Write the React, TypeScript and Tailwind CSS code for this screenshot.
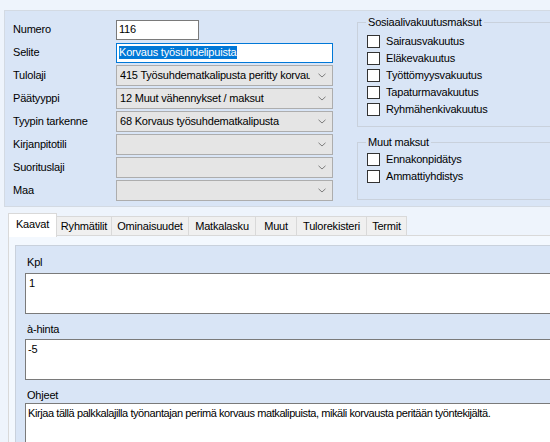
import React from 'react';

const Chevron = () => (
  <svg width="8" height="5" viewBox="0 0 8 5" className="shrink-0">
    <path d="M0.5 0.8 L4 4 L7.5 0.8" fill="none" stroke="#707070" strokeWidth="0.9" />
  </svg>
);

const Combo = ({ value }: { value?: string }) => (
  <div className="flex h-[21px] w-[217px] items-center border border-[#adadad] bg-[#e5e5e5] pl-[3px] pr-[6px]">
    <span className="mr-[8px] flex-1 overflow-hidden whitespace-nowrap">{value}</span>
    <Chevron />
  </div>
);

const Row = ({ label, children }: { label: string; children: React.ReactNode }) => (
  <div className="flex h-[21px] items-center">
    <div className="w-[103px] whitespace-nowrap">{label}</div>
    {children}
  </div>
);

const Check = ({ label }: { label: string }) => (
  <div className="flex h-[17px] items-center gap-[6px]">
    <div className="h-[13px] w-[13px] border border-[#333333] bg-white" />
    <span>{label}</span>
  </div>
);

const tabs = [
  { name: 'Kaavat', w: 'w-[49px]' },
  { name: 'Ryhmätilit', w: 'w-[55px]' },
  { name: 'Ominaisuudet', w: 'w-[77px]' },
  { name: 'Matkalasku', w: 'w-[67px]' },
  { name: 'Muut', w: 'w-[41px]' },
  { name: 'Tulorekisteri', w: 'w-[70px]' },
  { name: 'Termit', w: 'w-[40px]' },
];

export default function App() {
  return (
    <div className="h-[442px] w-[550px] overflow-hidden bg-[#eef4fc] pt-[10px] font-['Liberation_Sans',Arial,sans-serif] text-[11px] leading-[13px] tracking-[-0.2px] text-black">
      {/* Top panel */}
      <div className="ml-[4px] flex h-[197px] border-b border-l border-t border-[#d3dae3] bg-[#d9e5f6]">
        <div className="flex flex-col gap-[2px] pl-[8px] pt-[8px]">
          <Row label="Numero">
            <div className="flex h-[20px] w-[83px] items-center border border-[#7a7a7a] bg-white px-[2px]">116</div>
          </Row>
          <Row label="Selite">
            <div className="flex h-[20px] w-[217px] items-center border border-[#0078d7] bg-white px-[2px]">
              <span className="bg-[#0078d7] text-white">Korvaus työsuhdelipuista</span>
            </div>
          </Row>
          <Row label="Tulolaji">
            <Combo value="415 Työsuhdematkalipusta peritty korvaus" />
          </Row>
          <Row label="Päätyyppi">
            <Combo value="12 Muut vähennykset / maksut" />
          </Row>
          <Row label="Tyypin tarkenne">
            <Combo value="68 Korvaus työsuhdematkalipusta" />
          </Row>
          <Row label="Kirjanpitotili">
            <Combo />
          </Row>
          <Row label="Suorituslaji">
            <Combo />
          </Row>
          <Row label="Maa">
            <Combo />
          </Row>
        </div>

        <div className="ml-[24px] flex flex-col pt-[5px]">
          <fieldset className="h-[111px] w-[200px] border border-[#c9d1dc] pl-[8px]">
            <legend className="px-[2px]">Sosiaalivakuutusmaksut</legend>
            <div className="ml-[1px] mt-[4px] flex flex-col">
              <Check label="Sairausvakuutus" />
              <Check label="Eläkevakuutus" />
              <Check label="Työttömyysvakuutus" />
              <Check label="Tapaturmavakuutus" />
              <Check label="Ryhmähenkivakuutus" />
            </div>
          </fieldset>
          <fieldset className="mt-[9px] h-[64px] w-[200px] border border-[#c9d1dc] pl-[8px]">
            <legend className="px-[2px]">Muut maksut</legend>
            <div className="ml-[1px] mt-[2px] flex flex-col">
              <Check label="Ennakonpidätys" />
              <Check label="Ammattiyhdistys" />
            </div>
          </fieldset>
        </div>
      </div>

      {/* Tabs */}
      <div className="ml-[8px] mt-[6px] flex h-[22px] items-start">
        {tabs.map((t, i) =>
          i === 0 ? (
            <div
              key={t.name}
              className={`relative z-10 flex h-[24px] items-center justify-center border-l border-r border-t border-[#d9d9d9] bg-white pb-[3px] ${t.w}`}
            >
              {t.name}
            </div>
          ) : (
            <div
              key={t.name}
              className={`mt-[3px] flex h-[19px] items-center justify-center border-r border-t border-[#d9d9d9] bg-[#f0f0f0] ${t.w}`}
            >
              {t.name}
            </div>
          )
        )}
      </div>

      {/* Tab page */}
      <div className="ml-[8px] h-[300px] border-l border-t border-[#d9d9d9] bg-[#f3f8fe] pl-[6px] pt-[9px]">
        <div className="h-[300px] border-l border-t border-[#c9d1dc] bg-[#d9e5f6] pl-[9px] pt-[10px]">
          <div className="pl-[2px]">Kpl</div>
          <div className="mt-[4px] h-[41px] w-[600px] border border-[#7a7a7a] bg-white px-[3px] pt-[3px]">1</div>
          <div className="mt-[9px] pl-[2px]">à-hinta</div>
          <div className="mt-[3px] h-[41px] w-[600px] border border-[#7a7a7a] bg-white px-[2px] pt-[3px]">-5</div>
          <div className="mt-[9px] pl-[2px]">Ohjeet</div>
          <div className="mt-[1px] h-[60px] w-[600px] border border-[#7a7a7a] bg-white px-[2px] pt-[3px] tracking-[-0.42px]">
            Kirjaa tällä palkkalajilla työnantajan perimä korvaus matkalipuista, mikäli korvausta peritään työntekijältä.
          </div>
        </div>
      </div>
    </div>
  );
}
